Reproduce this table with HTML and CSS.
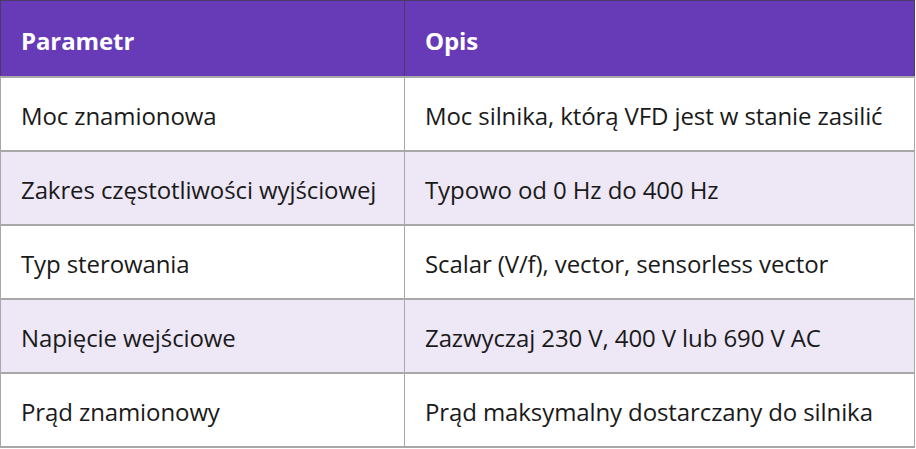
FILE: index.html
```html
<!DOCTYPE html>
<html lang="pl">
<head>
<meta charset="utf-8">
<link rel="stylesheet" href="styles.css">
</head>
<body>
<table class="spec">
  <thead>
    <tr><th class="col-param">Parametr</th><th>Opis</th></tr>
  </thead>
  <tbody>
    <tr><td>Moc znamionowa</td><td>Moc silnika, którą VFD jest w stanie zasilić</td></tr>
    <tr class="alt"><td>Zakres częstotliwości wyjściowej</td><td>Typowo od 0 Hz do 400 Hz</td></tr>
    <tr><td>Typ sterowania</td><td>Scalar (V/f), vector, sensorless vector</td></tr>
    <tr class="alt"><td>Napięcie wejściowe</td><td>Zazwyczaj 230 V, 400 V lub 690 V AC</td></tr>
    <tr><td>Prąd znamionowy</td><td>Prąd maksymalny dostarczany do silnika</td></tr>
  </tbody>
</table>
</body>
</html>
```
FILE: styles.css
```css
html, body {
  margin: 0;
  padding: 0;
  background: #ffffff;
}
.spec {
  border-collapse: collapse;
  table-layout: fixed;
  width: 915px;
  font-family: "Open Sans", "Noto Sans", sans-serif;
  font-size: 24px;
  letter-spacing: -0.1px;
  color: #1a1a1a;
}
.spec th, .spec td {
  text-align: left;
  white-space: nowrap;
  line-height: 30px;
  padding: 0 20px;
}
.spec th {
  background: #673ab7;
  color: #ffffff;
  font-weight: 700;
  border: 1px solid #4a3a66;
  height: 71px;
  padding-top: 4px;
}
.spec .col-param {
  width: 363px;
}
.spec td {
  border: 1px solid #a8a8a8;
  border-top-width: 2px;
  height: 69px;
  padding-top: 3px;
}
.spec tbody tr:last-child td {
  border-bottom-width: 2px;
}
.spec tr.alt td {
  background: #ede7f6;
}
```
